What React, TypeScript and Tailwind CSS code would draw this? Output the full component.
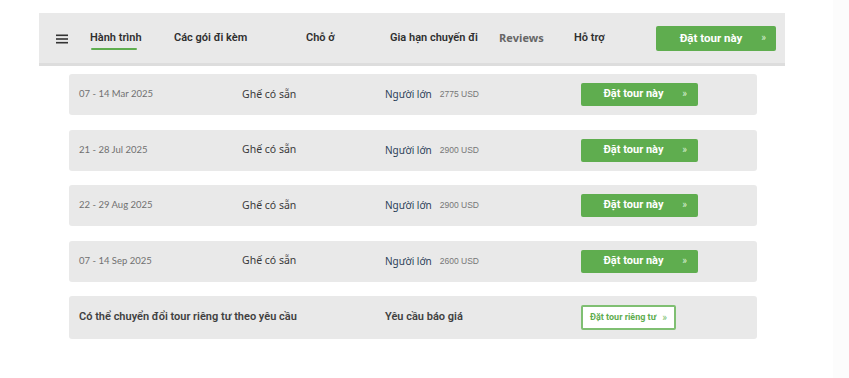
const departures = [
  { date: "07 - 14 Mar 2025", price: "2775 USD" },
  { date: "21 - 28 Jul 2025", price: "2900 USD" },
  { date: "22 - 29 Aug 2025", price: "2900 USD" },
  { date: "07 - 14 Sep 2025", price: "2600 USD" },
];

const navItems = [
  { label: "Hành trình", w: "w-[84px]", active: true },
  { label: "Các gói đi kèm", w: "w-[132px]" },
  { label: "Chỗ ở", w: "w-[84px]" },
  { label: "Gia hạn chuyến đi", w: "w-[109px]" },
  { label: "Reviews", w: "w-[75px]", muted: true },
  { label: "Hỗ trợ", w: "w-[82px]" },
];

function BookButton() {
  return (
    <button className="relative flex items-center justify-center w-[117px] h-[23px] rounded-[2px] bg-[#5fad4f] text-white text-[11px] font-bold">
      <span className="-ml-[12px]">Đặt tour này</span>
      <span className="absolute right-[11px] top-[3px] text-[10px] font-normal text-[#d9efd4]">»</span>
    </button>
  );
}

export default function App() {
  return (
    <div className="relative w-[849px] h-[378px] bg-white overflow-hidden font-['Roboto',sans-serif]">
      {/* sticky tab bar */}
      <div className="ml-[39px] mt-[13px] w-[746px] h-[53px] bg-[#e9e9e9] border-b-[3px] border-[#dddddd] flex items-center pl-[17px]">
        <svg className="w-[12px] h-[10px] mr-[22px] mt-[1px]" viewBox="0 0 12 10">
          <rect x="0" y="0.5" width="12" height="1.6" fill="#333" />
          <rect x="0" y="4.2" width="12" height="1.6" fill="#333" />
          <rect x="0" y="7.9" width="12" height="1.6" fill="#333" />
        </svg>
        {navItems.map((n) => (
          <div key={n.label} className={`${n.w} relative h-full flex items-center`}>
            <span
              className={`mt-[1px] ${
                n.muted
                  ? "text-[#666] font-['Open_Sans',sans-serif] font-bold text-[11px]"
                  : "text-[#2f2f2f] text-[11px] font-semibold"
              }`}
            >
              {n.label}
            </span>
            {n.active && (
              <div className="absolute left-[1px] top-[35px] w-[46px] h-[2px] bg-[#5fad4f] rounded-full" />
            )}
          </div>
        ))}
        <button className="relative flex items-center justify-center w-[120px] h-[25px] mt-[1px] rounded-[2px] bg-[#5fad4f] text-white text-[11.5px] font-bold">
          <span className="-ml-[10px]">Đặt tour này</span>
          <span className="absolute right-[10px] top-[4px] text-[10px] font-normal text-[#d9efd4]">»</span>
        </button>
      </div>

      {/* departures */}
      <div className="ml-[69px] mt-[8px] w-[688px] flex flex-col gap-[14.5px]">
        {departures.map((d) => (
          <div key={d.date} className="h-[41px] rounded-[3px] bg-[#e9e9e9] flex items-center pl-[10px]">
            <div className="w-[163px] text-[9.5px] text-[#707070] font-['Lato',sans-serif]">{d.date}</div>
            <div className="w-[143px] text-[10.5px] text-[#3a3a3a] font-['Noto_Sans',sans-serif]">Ghế có sẵn</div>
            <div className="w-[196px] flex items-center">
              <span className="text-[10px] text-[#2b3e58] font-['Noto_Sans',sans-serif]">Người lớn</span>
              <span className="ml-[8px] text-[8.5px] text-[#777] font-['Liberation_Sans',sans-serif]">{d.price}</span>
            </div>
            <BookButton />
          </div>
        ))}
        <div className="h-[43px] rounded-[3px] bg-[#e9e9e9] flex items-center pl-[10px]">
          <div className="w-[306px] text-[11px] font-semibold text-[#404040]">
            Có thể chuyển đổi tour riêng tư theo yêu cầu
          </div>
          <div className="w-[196px] text-[11px] font-semibold text-[#404040]">Yêu cầu báo giá</div>
          <button className="flex items-center w-[95px] h-[25px] rounded-[2px] border-2 border-[#7fbf72] bg-white pl-[7px] text-[9px] font-bold text-[#5fad4f]">
            Đặt tour riêng tư
            <span className="ml-[6px] font-normal text-[10px] text-[#7cbf6e]">»</span>
          </button>
        </div>
      </div>

      {/* faint scroll gutter */}
      <div className="absolute right-0 top-0 w-[16px] h-full bg-[#fcfcfc]" />
    </div>
  );
}
